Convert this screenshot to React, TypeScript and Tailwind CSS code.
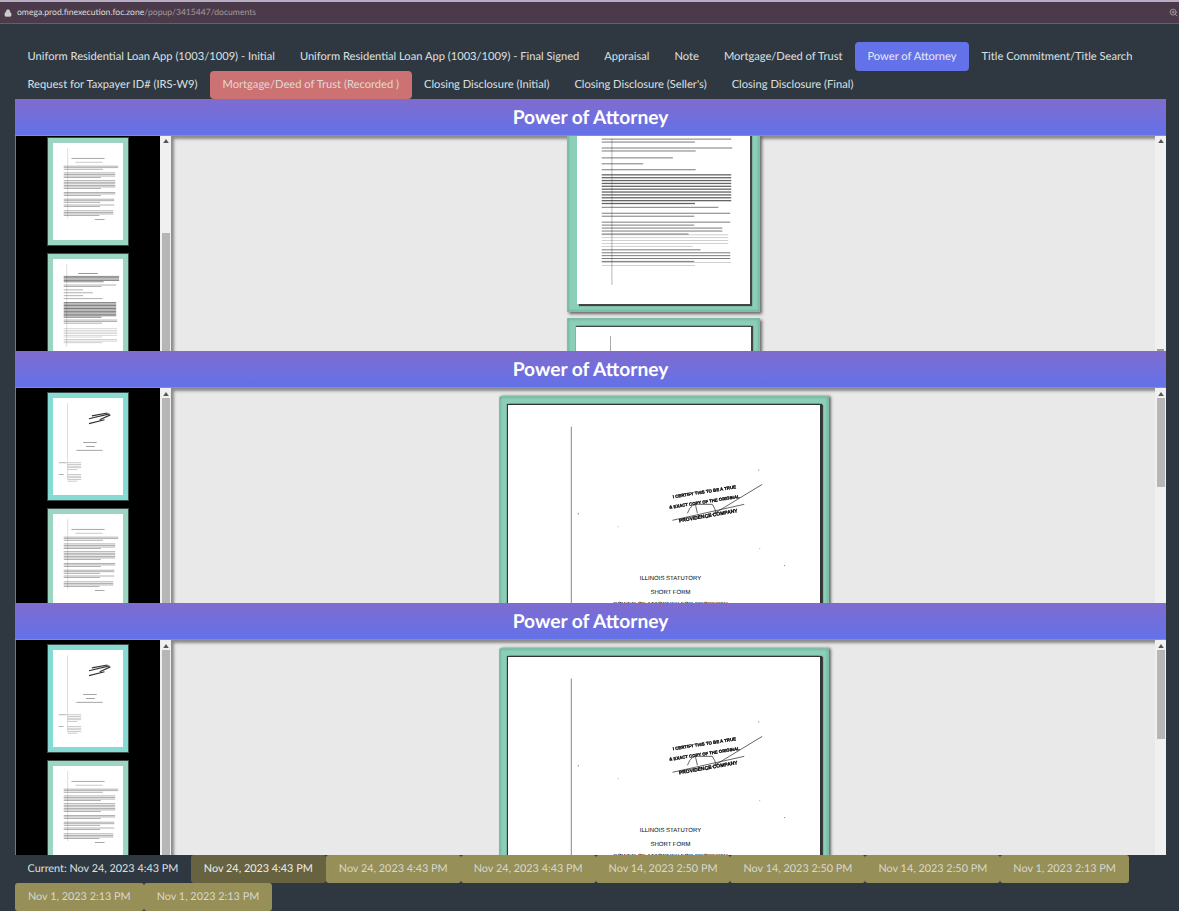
import React from 'react';
import { Lock, ZoomIn } from 'lucide-react';

const topTabs = [
  'Uniform Residential Loan App (1003/1009) - Initial',
  'Uniform Residential Loan App (1003/1009) - Final Signed',
  'Appraisal',
  'Note',
  'Mortgage/Deed of Trust',
  'Power of Attorney',
  'Title Commitment/Title Search',
  'Request for Taxpayer ID# (IRS-W9)',
  'Mortgage/Deed of Trust (Recorded )',
  'Closing Disclosure (Initial)',
  "Closing Disclosure (Seller's)",
  'Closing Disclosure (Final)',
];

const versions = [
  'Nov 24, 2023 4:43 PM',
  'Nov 24, 2023 4:43 PM',
  'Nov 24, 2023 4:43 PM',
  'Nov 14, 2023 2:50 PM',
  'Nov 14, 2023 2:50 PM',
  'Nov 14, 2023 2:50 PM',
  'Nov 1, 2023 2:13 PM',
  'Nov 1, 2023 2:13 PM',
  'Nov 1, 2023 2:13 PM',
];

// A block of illegible scanned lines: start x, start y, width, count, line step
function Para({ x, y, w, n, step, h = 1, o = 0.6 }: { x: number; y: number; w: number; n: number; step: number; h?: number; o?: number }) {
  return (
    <>
      {Array.from({ length: n }, (_, i) => (
        <rect key={i} x={x} y={y + i * step} width={i === n - 1 && n > 1 ? w * 0.72 : w} height={h} fill="#222" opacity={o} />
      ))}
    </>
  );
}

function LetterPreview() {
  return (
    <svg viewBox="0 0 72 99" className="block w-full h-full blur-[0.5px]">
      <rect x="15" y="5" width="0.5" height="72" fill="#bbb" />
      <Para x={19} y={15} w={34} n={1} step={3} h={0.8} o={0.5} />
      <Para x={23} y={19} w={28} n={1} step={3} h={0.7} o={0.35} />
      <Para x={11} y={23} w={56} n={3} step={1.6} h={0.8} o={0.45} />
      <Para x={11} y={30} w={53} n={4} step={1.6} h={0.8} o={0.45} />
      <Para x={11} y={38} w={53} n={6} step={1.6} h={0.8} o={0.45} />
      <Para x={11} y={50} w={53} n={3} step={1.6} h={0.8} o={0.45} />
      <Para x={11} y={57} w={52} n={3} step={1.6} h={0.8} o={0.45} />
      <Para x={11} y={63} w={52} n={2} step={1.6} h={0.8} o={0.45} />
      <Para x={11} y={69} w={51} n={4} step={1.6} h={0.8} o={0.45} />
      <Para x={43} y={78} w={10} n={1} step={3} h={0.8} o={0.5} />
    </svg>
  );
}

function DensePreview() {
  return (
    <svg viewBox="0 0 72 99" className="block w-full h-full blur-[0.5px]">
      <rect x="14" y="5" width="0.5" height="85" fill="#bbb" />
      <Para x={26} y={14} w={20} n={1} step={2} h={0.8} />
      <Para x={11} y={17} w={57} n={5} step={1.4} h={0.9} o={0.6} />
      <Para x={11} y={26} w={54} n={2} step={1.6} h={0.8} o={0.45} />
      <Para x={11} y={31} w={20} n={1} step={2} h={0.8} o={0.45} />
      <Para x={11} y={34} w={30} n={1} step={2} h={0.8} o={0.45} />
      <Para x={11} y={37} w={20} n={1} step={2} h={0.8} o={0.45} />
      <Para x={11} y={40} w={40} n={1} step={2} h={0.8} o={0.45} />
      <Para x={11} y={44} w={54} n={11} step={1.5} h={1} o={0.6} />
      <Para x={11} y={62} w={55} n={3} step={1.6} h={0.8} o={0.45} />
      <Para x={11} y={71} w={55} n={6} step={1.7} h={0.7} o={0.25} />
      <Para x={11} y={82} w={55} n={3} step={1.7} h={0.7} o={0.3} />
    </svg>
  );
}

function CoverPreview() {
  return (
    <svg viewBox="0 0 72 99" className="block w-full h-full blur-[0.4px]">
      <rect x="14.5" y="5" width="0.5" height="78" fill="#bbb" />
      <path d="M37 21 L58 16 M37 26 L53 22 M40 18 L56 15 M48 22 L59 17" stroke="#333" strokeWidth="1.2" />
      <Para x={31} y={45} w={14} n={1} step={2} h={0.7} />
      <Para x={34} y={49} w={9} n={1} step={2} h={0.7} />
      <Para x={24} y={53} w={27} n={1} step={2} h={0.7} />
      <Para x={6} y={66} w={8} n={1} step={2} h={0.6} />
      <Para x={15} y={66} w={14} n={5} step={1.7} h={0.6} o={0.4} />
      <Para x={6} y={78} w={5} n={1} step={2} h={0.6} />
      <Para x={15} y={78} w={14} n={5} step={1.7} h={0.6} o={0.4} />
    </svg>
  );
}

function Thumb({ tone, children }: { tone: string; children: React.ReactNode }) {
  return (
    <div className={`shrink-0 w-[82px] h-[109px] p-[5px] border border-[#3c4a48] ${tone}`}>
      <div className="w-full h-full bg-white">{children}</div>
    </div>
  );
}

function ArrowUp() {
  return (
    <svg viewBox="0 0 7 5" className="block w-[6px] h-[4px]">
      <path d="M3.5 0 L7 5 H0 Z" fill="#555" />
    </svg>
  );
}

function Scrollbar({ thumb, bottomArrow, arrowTop }: { thumb: string; bottomArrow?: boolean; arrowTop: string }) {
  return (
    <div className="relative shrink-0 w-[11px] h-full bg-[#f0f0f0] flex flex-col items-center overflow-hidden">
      <div className={`shrink-0 ${arrowTop}`}>
        <ArrowUp />
      </div>
      <div className={`shrink-0 w-[8px] bg-[#b6b6b6] ${thumb}`} />
      {bottomArrow && <div className="absolute bottom-0 w-[7px] h-[2px] bg-[#9a9a9a]" />}
    </div>
  );
}

function ScrolledPage() {
  return (
    <div className="flex flex-col items-center gap-[6px] -mt-[68px]">
      <div className="shrink-0 w-[193px] h-[244px] p-[9px] bg-[#8ccfb7] border border-[#7fbfa9] shadow-[2px_2px_3px_#666,inset_0_0_3px_#5f9f8a]">
        <div className="w-full h-[226px] bg-white shadow-[2px_2px_1px_#444]">
          <svg viewBox="0 0 175 226" className="block w-full h-full blur-[0.4px]">
            <rect x="35" y="60" width="0.7" height="148" fill="#999" />
            <Para x={25} y={60} w={131} n={2} step={3} />
            <Para x={25} y={69} w={132} n={2} step={3} />
            <Para x={25} y={79} w={72} n={1} step={3} />
            <Para x={25} y={85} w={42} n={1} step={3} />
            <Para x={25} y={91} w={95} n={1} step={3} />
            <Para x={25} y={96} w={131} n={11} step={2.9} h={1.3} o={0.7} />
            <Para x={25} y={129} w={118} n={1} step={3} />
            <Para x={25} y={135} w={130} n={2} step={3} />
            <Para x={25} y={144} w={130} n={2} step={3} />
            <Para x={25} y={150} w={122} n={3} step={3} />
            <Para x={25} y={157} w={128} n={5} step={2.9} h={0.7} o={0.3} />
            <Para x={25} y={172} w={100} n={1} step={3} />
            <Para x={25} y={175} w={130} n={4} step={2.9} />
            <Para x={25} y={185} w={131} n={2} step={3} h={0.7} o={0.3} />
          </svg>
        </div>
      </div>
      <div className="shrink-0 w-[193px] h-[244px] p-[8px] bg-[#8ccfb7] border border-[#7fbfa9] shadow-[2px_2px_3px_#666,inset_0_0_3px_#5f9f8a]">
        <div className="relative w-full h-[226px] bg-white shadow-[2px_-1px_1px_#444,0_-1px_1px_#444]">
          <div className="absolute left-[34px] top-[9px] w-[1px] h-[90px] bg-[#aaa]" />
        </div>
      </div>
    </div>
  );
}

function CoverPage() {
  return (
    <div className="mt-[8px] ml-[2px] shrink-0 w-[330px] h-[430px] p-[8px] bg-[#8ccfb7] border border-[#7fbfa9] rounded-[2px] shadow-[2px_0_3px_#666,inset_0_0_3px_#5f9f8a]">
      <div className="w-full h-[404px] bg-white shadow-[2px_-1px_1px_#333,3px_0_1px_#444,-1px_-1px_1px_#333]">
        <svg viewBox="0 0 313 404" className="block w-full h-full font-['Liberation_Sans',sans-serif] fill-black">
          <rect x="63" y="21" width="1" height="190" fill="#888" />
          <g className="blur-[0.25px]">
            <text x="197" y="88" fontSize="4.4" fontWeight="700" stroke="#000" strokeWidth="0.3" textAnchor="middle" transform="rotate(-9 197 86)">I CERTIFY THIS TO BE A TRUE</text>
            <text x="197" y="98" fontSize="4.3" fontWeight="700" stroke="#000" strokeWidth="0.3" textAnchor="middle" transform="rotate(-9 197 96)">&amp; EXACT COPY OF THE ORIGINAL</text>
            <text x="201" y="112" fontSize="5" fontWeight="700" stroke="#000" strokeWidth="0.3" textAnchor="middle" transform="rotate(-10 201 111)">PROVIDENCE COMPANY</text>
            <path d="M165 115 L237 99 M199 113 L255 79 M180 108 Q184 97 192 99 L205 99 Q208 103 209 109 M188 99 L190 108" stroke="#222" strokeWidth="0.7" fill="none" />
          </g>
          <rect x="251" y="64" width="1" height="1" fill="#777" />
          <rect x="70" y="108" width="1" height="1" fill="#555" />
          <rect x="110" y="121" width="1" height="1" fill="#aaa" />
          <rect x="252" y="143" width="1" height="1" fill="#aaa" />
          <rect x="277" y="160" width="1" height="1" fill="#777" />
          <text x="163" y="175" fontSize="6" textAnchor="middle">ILLINOIS STATUTORY</text>
          <text x="163" y="189" fontSize="6" textAnchor="middle">SHORT FORM</text>
          <text x="163" y="200.5" fontSize="6" textAnchor="middle">POWER OF ATTORNEY FOR PROPERTY</text>
        </svg>
      </div>
    </div>
  );
}

function Panel({ scrolled }: { scrolled?: boolean }) {
  return (
    <section className="h-[252px] flex flex-col">
      <h2 className="shrink-0 h-[37px] pt-[2px] flex items-center justify-center bg-gradient-to-b from-[#7f6bce] to-[#6371e9] border-b border-[#8b8fa8] text-white text-[19.2px] font-bold">
        Power of Attorney
      </h2>
      <div className="flex h-[215px] overflow-hidden">
        <div className={`shrink-0 w-[145px] bg-black border-l border-[#777] flex flex-col items-center gap-[7px] overflow-hidden ${scrolled ? 'pt-[1px]' : 'pt-[4px]'}`}>
          {scrolled ? (
            <>
              <Thumb tone="bg-[#9cd6c2]"><LetterPreview /></Thumb>
              <Thumb tone="bg-[#9cd6c2]"><DensePreview /></Thumb>
            </>
          ) : (
            <>
              <Thumb tone="bg-[#86dad4]"><CoverPreview /></Thumb>
              <Thumb tone="bg-[#9cd6c2]"><LetterPreview /></Thumb>
            </>
          )}
        </div>
        <Scrollbar
          arrowTop={scrolled ? 'mt-[3px]' : 'mt-[4px]'}
          thumb={scrolled ? 'mt-[90px] h-[120px]' : 'mt-[2px] h-[210px]'}
        />
        <div className="flex-1 min-w-0 bg-[#e9e9e9] flex flex-col items-center overflow-hidden shadow-[inset_3px_3px_3px_#8a8a8a]">
          {scrolled ? <ScrolledPage /> : <CoverPage />}
        </div>
        <Scrollbar
          bottomArrow={scrolled}
          arrowTop={scrolled ? 'mt-[3px]' : 'mt-[4px]'}
          thumb={scrolled ? 'h-0' : 'mt-[2px] h-[89px]'}
        />
      </div>
    </section>
  );
}

export default function App() {
  return (
    <div className="w-full h-[911px] overflow-hidden bg-[#2f3840] text-[#dde0e3] font-['Lato','Noto_Sans',sans-serif] [text-rendering:geometricPrecision]">
      <div className="h-[24px] flex items-center bg-[#4b3b4a] border-t-2 border-b border-t-[#b7aec6] border-b-[#6d5c67] pl-[4px] pr-[1px] text-[8.6px]">
        <Lock size={8} className="text-[#cfcfcf] mr-[5px]" fill="#cfcfcf" />
        <span className="text-[#dcdcdc]">omega.prod.finexecution.foc.zone</span>
        <span className="text-[#a3989f]">/popup/3415447/documents</span>
        <ZoomIn size={9} className="ml-auto text-[#b5adb3]" />
      </div>

      <nav className="flex flex-wrap px-[15px] pt-[18px] text-[11.15px]">
        {topTabs.map((tab) => (
          <a
            key={tab}
            className={`h-[28.5px] px-[12.5px] pt-[2px] flex items-center rounded-[4px] whitespace-nowrap ${
              tab === 'Power of Attorney' ? 'bg-[#6372e8] text-[#e8eaf5]' : ''
            } ${tab === 'Mortgage/Deed of Trust (Recorded )' ? 'bg-[#cd7272] text-[#e0d8d8]' : ''}`}
          >
            {tab}
          </a>
        ))}
      </nav>

      <main className="pl-[15px] pr-[13px]">
        <Panel scrolled />
        <Panel />
        <Panel />
      </main>

      <footer className="flex flex-wrap px-[15px] text-[10.85px]">
        <span className="h-[28px] px-[12.5px] pt-[1px] flex items-center whitespace-nowrap">Current: Nov 24, 2023 4:43 PM</span>
        {versions.map((date, i) => (
          <a
            key={i}
            className={`h-[28px] px-[13px] pt-[1px] flex items-center rounded-[3px] whitespace-nowrap ${
              i === 0 ? 'bg-[#676341] text-[#eeeeee]' : 'bg-[#968f57] text-[#d8d8d0]'
            }`}
          >
            {date}
          </a>
        ))}
      </footer>
    </div>
  );
}
